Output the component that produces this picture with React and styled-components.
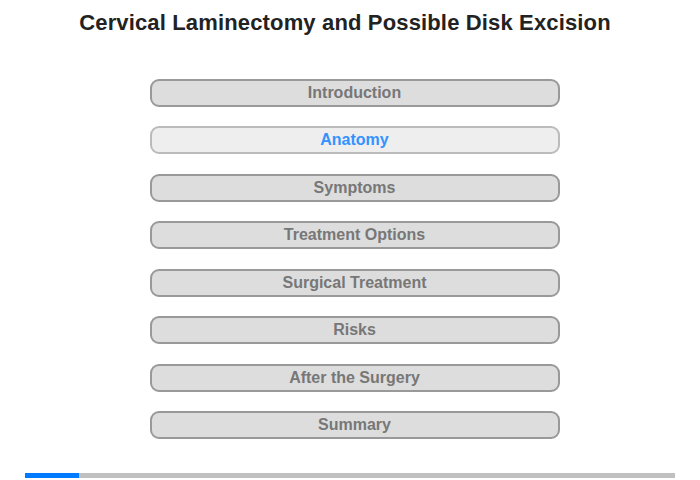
import React from "react";
import styled, { createGlobalStyle } from "styled-components";

const sections = [
  "Introduction",
  "Anatomy",
  "Symptoms",
  "Treatment Options",
  "Surgical Treatment",
  "Risks",
  "After the Surgery",
  "Summary",
];

const current = 1;

const App = () => {
  return (
    <>
      <GlobalStyle />
      <Page>
        <Title>Cervical Laminectomy and Possible Disk Excision</Title>
        <Menu>
          {sections.map((name, i) => (
            <MenuButton key={name} $active={i === current}>
              {name}
            </MenuButton>
          ))}
        </Menu>
        <Progress>
          <ProgressFill style={{ width: `${(1 / 12) * 100}%` }} />
        </Progress>
      </Page>
    </>
  );
};

export default App;

const GlobalStyle = createGlobalStyle`
  body {
    margin: 0;
    background: #ffffff;
    font-family: "Liberation Sans", Arial, sans-serif;
  }
`;

const Page = styled.div`
  width: 700px;
  height: 480px;
  display: flex;
  flex-direction: column;
  align-items: center;
`;

const Title = styled.h1`
  margin: 10px 10px 0 0;
  font-size: 22px;
  line-height: 26px;
  letter-spacing: 0.15px;
  font-weight: bold;
  color: #222222;
  text-align: center;
  white-space: nowrap;
`;

const Menu = styled.div`
  margin: 43px 0 0 9px;
  display: flex;
  flex-direction: column;
  gap: 19.43px;
`;

const MenuButton = styled.div`
  box-sizing: border-box;
  width: 410px;
  height: 28px;
  border: 2px solid ${(p) => (p.$active ? "#bbbbbb" : "#999999")};
  border-radius: 9px;
  background: ${(p) => (p.$active ? "#eeeeee" : "#dddddd")};
  color: ${(p) => (p.$active ? "#3392ff" : "#777777")};
  font-size: 16px;
  font-weight: bold;
  display: flex;
  align-items: center;
  justify-content: center;
  cursor: pointer;
`;

const Progress = styled.div`
  margin-top: 34px;
  width: 650px;
  height: 5px;
  background: #c0c0c0;
`;

const ProgressFill = styled.div`
  height: 100%;
  background: #007bff;
`;
